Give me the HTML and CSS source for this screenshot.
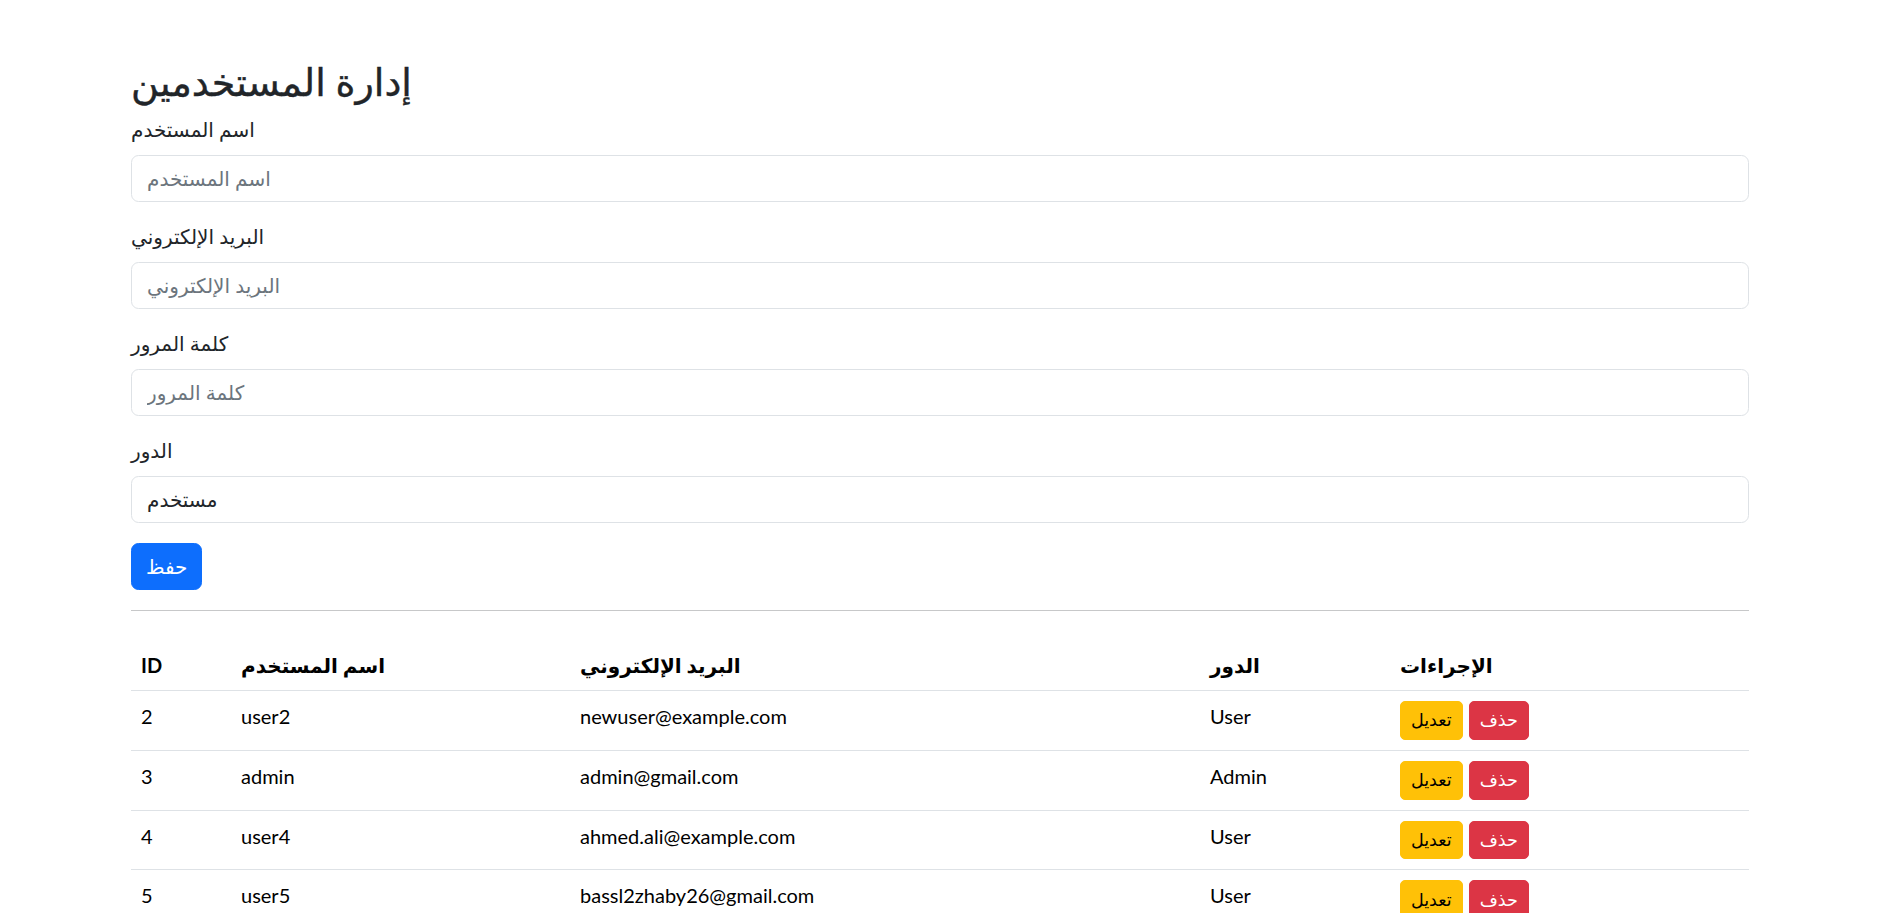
FILE: index.html
```html
<!DOCTYPE html>
<html lang="ar">
<head>
<meta charset="utf-8">
<title>إدارة المستخدمين</title>
<link rel="stylesheet" href="styles.css">
</head>
<body>
<div class="container">
  <h2 class="title">إدارة المستخدمين</h2>
  <form class="user-form">
    <div class="field-group">
      <label class="field-label">اسم المستخدم</label>
      <input class="field" type="text" placeholder="اسم المستخدم">
    </div>
    <div class="field-group">
      <label class="field-label">البريد الإلكتروني</label>
      <input class="field" type="email" placeholder="البريد الإلكتروني">
    </div>
    <div class="field-group">
      <label class="field-label">كلمة المرور</label>
      <input class="field" type="password" placeholder="كلمة المرور">
    </div>
    <div class="field-group">
      <label class="field-label">الدور</label>
      <select class="field select-field">
        <option>مستخدم</option>
        <option>مدير</option>
      </select>
    </div>
    <button type="button" class="btn btn-primary">حفظ</button>
  </form>
  <hr class="divider">
  <table class="users-table">
    <colgroup>
      <col class="col-id">
      <col class="col-name">
      <col class="col-email">
      <col class="col-role">
      <col class="col-actions">
    </colgroup>
    <thead>
      <tr>
        <th>ID</th>
        <th>اسم المستخدم</th>
        <th>البريد الإلكتروني</th>
        <th>الدور</th>
        <th>الإجراءات</th>
      </tr>
    </thead>
    <tbody>
      <tr>
        <td>2</td><td>user2</td><td>newuser@example.com</td><td>User</td>
        <td><div class="actions"><button class="btn-sm btn-warning">تعديل</button><button class="btn-sm btn-danger">حذف</button></div></td>
      </tr>
      <tr>
        <td>3</td><td>admin</td><td>admin@gmail.com</td><td>Admin</td>
        <td><div class="actions"><button class="btn-sm btn-warning">تعديل</button><button class="btn-sm btn-danger">حذف</button></div></td>
      </tr>
      <tr>
        <td>4</td><td>user4</td><td>ahmed.ali@example.com</td><td>User</td>
        <td><div class="actions"><button class="btn-sm btn-warning">تعديل</button><button class="btn-sm btn-danger">حذف</button></div></td>
      </tr>
      <tr>
        <td>5</td><td>user5</td><td>bassl2zhaby26@gmail.com</td><td>User</td>
        <td><div class="actions"><button class="btn-sm btn-warning">تعديل</button><button class="btn-sm btn-danger">حذف</button></div></td>
      </tr>
    </tbody>
  </table>
</div>
</body>
</html>
```
FILE: styles.css
```css
* { box-sizing: border-box; }

body {
  margin: 0;
  background: #fff;
  color: #212529;
  font-family: "Noto Sans", "DejaVu Sans", sans-serif;
  font-size: 20px;
  line-height: 1.5;
}

.container {
  width: 1618px;
  margin: 0 auto;
  padding-top: 57px;
}

.title {
  margin: 0 0 10px;
  font-size: 38px;
  font-weight: 500;
  line-height: 48px;
  color: #212529;
  -webkit-text-stroke: 0.4px #212529;
}

.field-group {
  margin-bottom: 20px;
}

.field-label {
  display: block;
  margin-bottom: 10px;
  line-height: 30px;
}

.field {
  display: block;
  width: 100%;
  height: 47px;
  padding: 7px 15px;
  font-family: inherit;
  font-size: 20px;
  line-height: 30px;
  color: #212529;
  background: #fff;
  border: 1px solid #dee2e6;
  border-radius: 7.5px;
  outline: none;
}

.field::placeholder {
  color: #6c757d;
  opacity: 1;
}

.select-field {
  appearance: none;
  -webkit-appearance: none;
}

.btn {
  display: inline-block;
  height: 47px;
  padding: 7px 14px;
  font-family: inherit;
  font-size: 20px;
  line-height: 30px;
  border: 1px solid transparent;
  border-radius: 7.5px;
  cursor: pointer;
}

.btn-primary {
  background: #0d6efd;
  border-color: #0d6efd;
  color: #fff;
}

.divider {
  margin: 20px 0 29px;
  border: 0;
  border-top: 1px solid #212529;
  opacity: 0.25;
}

.users-table {
  width: 100%;
  border-collapse: collapse;
  table-layout: fixed;
  color: #000;
  font-family: "Lato", "Noto Sans", "DejaVu Sans", sans-serif;
}

.col-id { width: 100px; }
.col-name { width: 339px; }
.col-email { width: 630px; }
.col-role { width: 190px; }
.col-actions { width: auto; }

.users-table th,
.users-table td {
  padding: 10px;
  text-align: left;
  vertical-align: top;
  line-height: 30px;
  border-bottom: 1px solid #dee2e6;
}

.users-table th {
  font-weight: 700;
}

.actions {
  display: flex;
  gap: 6px;
}

.btn-sm {
  height: 38.75px;
  padding: 5px 10px;
  font-family: inherit;
  font-size: 17.5px;
  line-height: 26.25px;
  border: 1px solid transparent;
  border-radius: 5px;
  cursor: pointer;
}

.btn-warning {
  background: #ffc107;
  border-color: #ffc107;
  color: #000;
}

.btn-danger {
  background: #dc3545;
  border-color: #dc3545;
  color: #fff;
}
```
